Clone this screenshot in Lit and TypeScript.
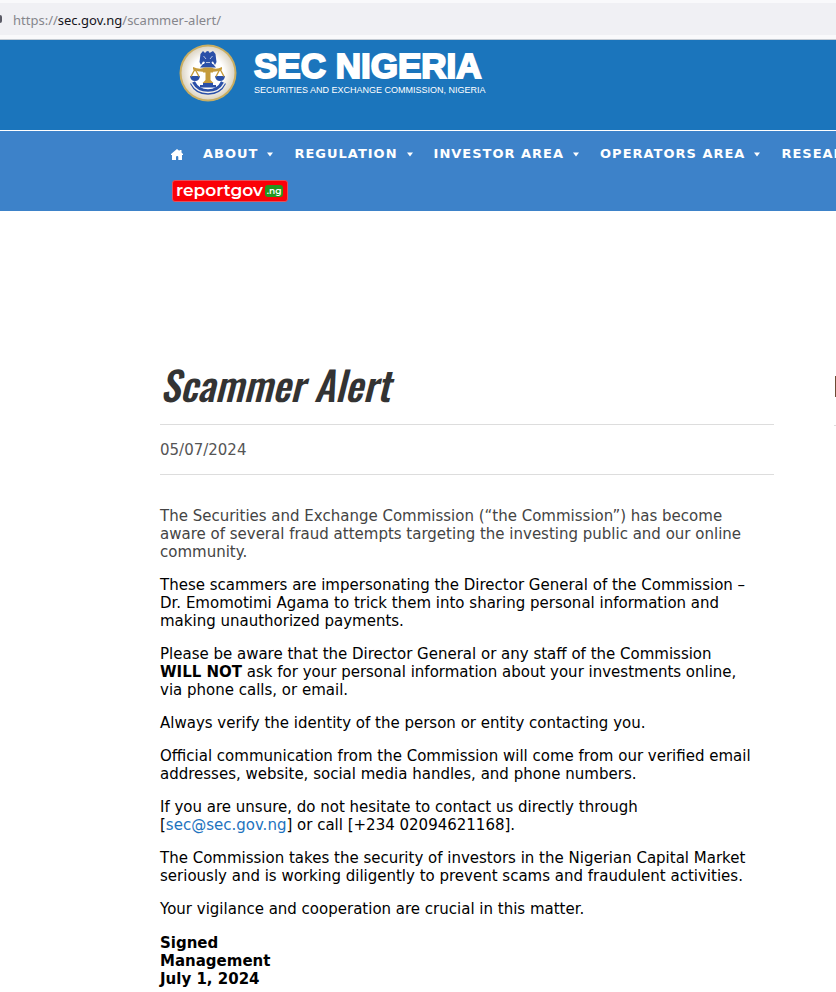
import { LitElement, html, css, svg } from "lit";
import { customElement } from "lit/decorators.js";

const crest = svg`
  <circle cx="29" cy="29" r="28.500" fill="#c9ae62"/>
  <circle cx="29" cy="29" r="26.500" fill="url(#face)"/>
  <g fill="#2b50a8">
    <path d="M26 9 L28 7 L30 7.500 L30.500 9 L34 7 L36.500 10 L37.500 18 L36 21 L34 17.500 L32.500 18 L34 22 H24 L26 18 L24 17.500 L22 21 L20.500 18 L21.500 10 L24 7 Z"/>
    <path d="M24 20 H34 L37 23.500 H21 Z"/>
    <path d="M11 32 H21 Q20.500 37 16 37 Q11.500 37 11 32 Z"/>
    <path d="M36 32 H46 Q45.500 37 41 37 Q36.500 37 36 32 Z"/>
    <path d="M24 39 H34 V41 H37 V43.500 H21 V41 H24 Z"/>
  </g>
  <path d="M24.500 12 L27 15 M33.500 12 L31 15 M27 18.500 H31" stroke="#d9e0f0" stroke-width="0.800" fill="none"/>
  <g fill="#c59b3b">
    <path d="M14 23 Q21 26 26 23.500 H32 Q37 26 43 23 V25.500 Q37 28.500 32 27.500 H26 Q21 28.500 14 25.500 Z"/>
    <path d="M24 25 H34 V28.500 H31.500 V36 L34.500 39 H23.500 L26.500 36 V28.500 H24 Z"/>
  </g>
  <path d="M16 25 L12 32.500 M16 25 L20 32.500 M41 25 L37 32.500 M41 25 L45 32.500" stroke="#c59b3b" stroke-width="1.400" fill="none"/>
  <path d="M13.500 38.500 Q18 48 29 48 Q40 48 44.500 38.500" stroke="#2b50a8" stroke-width="5.500" fill="none"/>
  <path d="M12.500 39 Q17.500 48.500 29 48.500 Q40.500 48.500 45.500 39" stroke="#f6f4ee" stroke-width="1.500" fill="none"/>`;

const menu = ["About", "Regulation", "Investor Area", "Operators Area", "Research"];

@customElement("app-root")
export class AppRoot extends LitElement {
  static styles = css`
    :host {
      display: block;
      overflow: hidden;
      background: #fff;
      color: #000;
      font-family: Verdana, "DejaVu Sans", sans-serif;
      font-size: 15px;
      line-height: 18px;
    }
    a { color: inherit; text-decoration: none; }
    .browser {
      padding: 3px 0 4px;
      background: #f9f9fb;
      border-bottom: 1px solid #c4cbd3;
    }
    .address {
      display: flex;
      align-items: center;
      height: 32px;
      gap: 11px;
      background: #f0f0f4;
      color: #86868c;
      font: 13px/20px "Segoe UI", "Noto Sans", sans-serif;
    }
    .address b { font-weight: 400; color: #15141a; }
    .url { padding-top: 2px; }
    .lock { width: 2px; height: 8px; background: #5b5b66; border-radius: 0 2px 2px 0; }
    .brand {
      display: flex;
      gap: 17px;
      height: 90px;
      padding-left: 179px;
      background: #1b75bc;
      border-bottom: 1px solid #fff;
      color: #fff;
    }
    .crest { width: 58px; height: 58px; margin-top: 4px; }
    .name { display: flex; flex-direction: column; white-space: nowrap; }
    .title {
      margin-top: 6px;
      font: 700 35px/39px "Liberation Sans", Arial, sans-serif;
      -webkit-text-stroke: 2px #fff;
    }
    .subtitle { font: 9px/10px "Liberation Sans", Arial, sans-serif; }
    nav {
      height: 80px;
      padding-left: 171px;
      background: #3d82c9;
      color: #fff;
      overflow: hidden;
    }
    .menu {
      display: flex;
      align-items: center;
      gap: 20px;
      height: 46px;
      margin: 0;
      padding: 0;
      list-style: none;
      white-space: nowrap;
      font-size: 13px;
      font-weight: 700;
      letter-spacing: 1px;
      text-transform: uppercase;
    }
    .menu a { display: flex; align-items: center; gap: 8px; }
    .caret { width: 8px; height: 5px; }
    .home { width: 12px; height: 11px; display: block; }
    .report {
      display: inline-flex;
      align-items: center;
      gap: 2px;
      height: 20px;
      margin: 3px 0 0 1px;
      padding: 0 4px 0 3px;
      border: 1px solid #e0525c;
      border-radius: 3px;
      background: #fb0007;
      font: 600 17px/20px Montserrat, "Inter", sans-serif;
    }
    .word { padding-bottom: 3px; }
    .ng {
      padding: 0 2px;
      border-radius: 3px;
      background: #23971f;
      font-size: 9px;
      line-height: 12px;
    }
    .page {
      display: flex;
      gap: 60px;
      padding: 149px 0 0 160px;
    }
    article { flex: 1; min-width: 0; }
    h1 {
      margin: 0;
      height: 64px;
      color: #333;
      font: italic 500 40px/48px Oswald, "Liberation Sans", sans-serif;
    }
    .date {
      padding: 16px 0 15px;
      border: solid #ddd;
      border-width: 1px 0;
      color: #555;
      margin-bottom: 32px;
    }
    .text { padding-right: 20px; }
    p { margin: 0 0 15px; }
    .lead { color: #444; }
    .mail { color: #1e73be; }
    .signed { margin-top: 16px; font-weight: 700; }
    aside { width: 2px; }
    .widget {
      display: flex;
      justify-content: flex-end;
      padding: 16px 0 28px;
      border-bottom: 1px solid #ddd;
    }
    .stem { width: 1px; height: 21px; background: #6d4c35; }
  `;

  render() {
    return html`
      <div class="browser">
        <div class="address" role="textbox" aria-label="Address">
          <span class="lock"></span>
          <span class="url">https://<b>sec.gov.ng</b>/scammer-alert/</span>
        </div>
      </div>
      <header>
        <div class="brand">
          <svg class="crest" viewBox="0 0 58 58" aria-hidden="true">
            <defs>
              <radialGradient id="face">
                <stop offset="0.600" stop-color="#fff"/>
                <stop offset="1" stop-color="#ddd5c4"/>
              </radialGradient>
            </defs>
            ${crest}
          </svg>
          <div class="name">
            <span class="title">SEC NIGERIA</span>
            <span class="subtitle">SECURITIES AND EXCHANGE COMMISSION, NIGERIA</span>
          </div>
        </div>
        <nav>
          <ul class="menu">
            <li>
              <a href="#" aria-label="Home">
                <svg class="home" viewBox="0 0 12 11"><path d="M6 0 L8.500 2 V1 H10.500 V3.500 L12 5 V6 H11 V11 H7.300 V8 Q7.300 7 6.200 7 Q5 7 5 8 V11 H1 V6 H0 V5 Z" fill="#fff"/></svg>
              </a>
            </li>
            ${menu.map((m) => html`<li>
              <a href="#">${m}<svg class="caret" viewBox="0 0 8 5"><path d="M1 0.500 H7 L4 4.500 Z" fill="#fff"/></svg></a>
            </li>`)}
          </ul>
          <a class="report" href="#"><span class="word">reportgov</span><span class="ng">.ng</span></a>
        </nav>
      </header>
      <main class="page">
        <article>
          <h1>Scammer Alert</h1>
          <div class="date"><time datetime="2024-07-05">05/07/2024</time></div>
          <div class="text">
            <p class="lead">The Securities and Exchange Commission (“the Commission”) has become aware of several fraud attempts targeting the investing public and our online community.</p>
            <p>These scammers are impersonating the Director General of the Commission – Dr. Emomotimi Agama to trick them into sharing personal information and making unauthorized payments.</p>
            <p>Please be aware that the Director General or any staff of the Commission <strong>WILL NOT</strong> ask for your personal information about your investments online, via phone calls, or email.</p>
            <p>Always verify the identity of the person or entity contacting you.</p>
            <p>Official communication from the Commission will come from our verified email addresses, website, social media handles, and phone numbers.</p>
            <p>If you are unsure, do not hesitate to contact us directly through [<a class="mail" href="mailto:sec@sec.gov.ng">sec@sec.gov.ng</a>] or call [+234 02094621168].</p>
            <p>The Commission takes the security of investors in the Nigerian Capital Market seriously and is working diligently to prevent scams and fraudulent activities.</p>
            <p>Your vigilance and cooperation are crucial in this matter.</p>
            <div class="signed">Signed<br>Management<br>July 1, 2024</div>
          </div>
        </article>
        <aside><div class="widget"><span class="stem"></span></div></aside>
      </main>
    `;
  }
}
